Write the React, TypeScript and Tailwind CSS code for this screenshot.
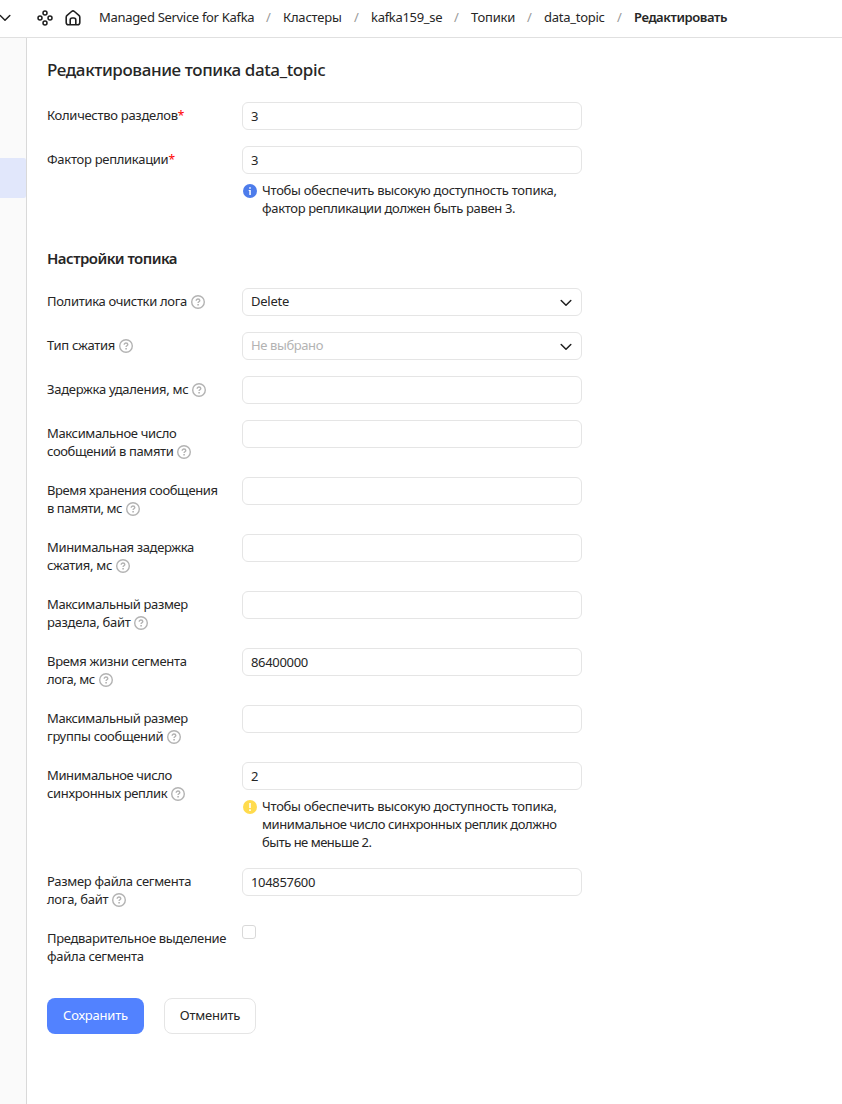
import type { ReactNode } from 'react';

function HelpIcon() {
  return (
    <svg className="ml-1 inline-block size-[14px] align-[-3px]" viewBox="0 0 14 14" fill="none" stroke="#b3b3b3" strokeWidth="1.4">
      <circle cx="7" cy="7" r="6.3" />
      <path d="M5.2 5.7c0-1 .8-1.7 1.8-1.7s1.8.7 1.8 1.6c0 1.2-1.7 1.2-1.7 2.4" />
      <path d="M7.1 9v1.4" strokeWidth="1.6" />
    </svg>
  );
}

function Chevron({ className }: { className: string }) {
  return (
    <svg className={className} viewBox="0 0 12 8" fill="none" stroke="#1f1f1f" strokeWidth="1.5" strokeLinecap="round" strokeLinejoin="round">
      <path d="M1.2 1.5 6 6.2l4.8-4.7" />
    </svg>
  );
}

function Row({ lines, required, help, children }: { lines: [string, string][]; required?: boolean; help?: boolean; children: ReactNode }) {
  return (
    <div className="flex items-start">
      <div className="w-[195px] shrink-0 pt-1 pb-px leading-[18px] whitespace-nowrap">
        {lines.map(([text, tracking], i) => (
          <div key={text} className="h-[18px]">
            <span className={tracking}>{text}</span>
            {required && <span className="text-[12px] text-[#f00]">*</span>}
            {help && i === lines.length - 1 && <HelpIcon />}
          </div>
        ))}
      </div>
      <div className="w-[340px]">{children}</div>
    </div>
  );
}

function Field({ value }: { value?: string }) {
  return <div className="flex h-7 items-center rounded-md border border-[#e5e5e5] px-2 pt-[2px] tracking-[-0.32px]">{value}</div>;
}

function Select({ value, muted }: { value: string; muted?: boolean }) {
  return (
    <div className="flex h-7 items-center justify-between rounded-md border border-[#e5e5e5] px-2">
      <span className={muted ? 'tracking-[-0.4px] text-[#b3b3b3]' : 'tracking-[-0.25px]'}>{value}</span>
      <Chevron className="mr-[1px] mt-px h-2 w-3" />
    </div>
  );
}

function Hint({ kind, lines }: { kind: 'info' | 'warning'; lines: [string, string][] }) {
  return (
    <div className="mt-[7px] mb-px flex leading-[18px]">
      <svg className="mt-[3px] mr-[5px] ml-px size-[14px] shrink-0" viewBox="0 0 14 14">
        <circle cx="7" cy="7" r="7" fill={kind === 'info' ? '#4d7ceb' : '#ffdb4d'} />
        {kind === 'info' ? (
          <path d="M6.2 3.2h1.6v1.5H6.2zM5.7 6h2.1v5H6.3V7.1h-.6z" fill="#fff" />
        ) : (
          <path d="M6.2 3h1.6v5H6.2zM6.2 9.3h1.6V11H6.2z" fill="#fff" />
        )}
      </svg>
      <div className="whitespace-nowrap">
        {lines.map(([text, tracking]) => (
          <div key={text} className={tracking}>{text}</div>
        ))}
      </div>
    </div>
  );
}

const crumbs: [string, string][] = [
  ['Managed Service for Kafka', 'w-[155px] tracking-[-0.31px]'],
  ['Кластеры', 'w-[59px] tracking-[-0.2px]'],
  ['kafka159_se', 'w-[71px] tracking-[-0.3px]'],
  ['Топики', 'w-[44px] tracking-[-0.2px]'],
  ['data_topic', 'w-[61px] tracking-[-0.26px]'],
];

export default function App() {
  return (
    <div className="flex h-[1104px] flex-col overflow-hidden bg-white font-['Noto_Sans','Open_Sans',sans-serif] text-[13px] text-[#262626]">
      <header className="flex h-[38px] shrink-0 items-center border-b border-[#e0e0e0] pb-[2px]">
        <Chevron className="-ml-px h-2 w-3" />
        <svg className="ml-[26px] size-4" viewBox="0 0 16 16" fill="none" stroke="#1f1f1f" strokeWidth="1.5">
          <circle cx="8" cy="3" r="2" />
          <circle cx="8" cy="13" r="2" />
          <circle cx="3" cy="8" r="2" />
          <circle cx="13" cy="8" r="2" />
        </svg>
        <svg className="ml-3 size-4" viewBox="0 0 16 16" fill="none" stroke="#1f1f1f" strokeWidth="1.6" strokeLinejoin="round">
          <path d="M1.2 7.2c0-.8.3-1.4.9-1.9L6.6 1.5a2.2 2.2 0 0 1 2.8 0l4.5 3.8c.6.5.9 1.1.9 1.9v5.3a2.3 2.3 0 0 1-2.3 2.3h-9a2.3 2.3 0 0 1-2.3-2.3z" />
          <path d="M5.2 14.6V10a2 2 0 0 1 2-2h1.6a2 2 0 0 1 2 2v4.6" />
        </svg>
        <nav className="ml-[18px] flex whitespace-nowrap">
          {crumbs.map(([text, style]) => (
            <div key={text} className="flex">
              <span className={style}>{text}</span>
              <span className="w-[29px] text-center text-[#999]">/</span>
            </div>
          ))}
          <span className="font-semibold tracking-[-0.4px]">Редактировать</span>
        </nav>
      </header>
      <div className="flex flex-1">
        <aside className="w-[27px] shrink-0 border-r border-[#d9d9d9] bg-[#fafafa] pt-[120px]">
          <div className="h-10 rounded-r-[2px] bg-[#e1e7fb]" />
        </aside>
        <main className="pl-5">
          <h1 className="mt-5 h-6 text-[17px] leading-6 font-medium tracking-[-0.39px] whitespace-nowrap">Редактирование топика data_topic</h1>
          <div className="mt-5 flex flex-col gap-4">
            <Row lines={[['Количество разделов', 'tracking-[-0.29px]']]} required><Field value="3" /></Row>
            <Row lines={[['Фактор репликации', 'tracking-[-0.29px]']]} required>
              <Field value="3" />
              <Hint kind="info" lines={[['Чтобы обеспечить высокую доступность топика,', 'tracking-[-0.26px]'], ['фактор репликации должен быть равен 3.', 'tracking-[-0.34px]']]} />
            </Row>
          </div>
          <h2 className="mt-[30px] h-5 text-[15px] leading-5 font-semibold tracking-[-0.55px]">Настройки топика</h2>
          <div className="mt-5 flex flex-col gap-4">
            <Row help lines={[['Политика очистки лога', 'tracking-[-0.32px]']]}><Select value="Delete" /></Row>
            <Row help lines={[['Тип сжатия', 'tracking-[-0.3px]']]}><Select value="Не выбрано" muted /></Row>
            <Row help lines={[['Задержка удаления, мс', 'tracking-[-0.28px]']]}><Field /></Row>
            <Row help lines={[['Максимальное число', 'tracking-[-0.36px]'], ['сообщений в памяти', 'tracking-[-0.38px]']]}><Field /></Row>
            <Row help lines={[['Время хранения сообщения', 'tracking-[-0.4px]'], ['в памяти, мс', 'tracking-[-0.48px]']]}><Field /></Row>
            <Row help lines={[['Минимальная задержка', 'tracking-[-0.35px]'], ['сжатия, мс', 'tracking-[-0.3px]']]}><Field /></Row>
            <Row help lines={[['Максимальный размер', 'tracking-[-0.37px]'], ['раздела, байт', 'tracking-[-0.3px]']]}><Field /></Row>
            <Row help lines={[['Время жизни сегмента', 'tracking-[-0.3px]'], ['лога, мс', 'tracking-[-0.48px]']]}><Field value="86400000" /></Row>
            <Row help lines={[['Максимальный размер', 'tracking-[-0.37px]'], ['группы сообщений', 'tracking-[-0.31px]']]}><Field /></Row>
            <Row help lines={[['Минимальное число', 'tracking-[-0.4px]'], ['синхронных реплик', 'tracking-[-0.35px]']]}>
              <Field value="2" />
              <Hint kind="warning" lines={[['Чтобы обеспечить высокую доступность топика,', 'tracking-[-0.26px]'], ['минимальное число синхронных реплик должно', 'tracking-[-0.4px]'], ['быть не меньше 2.', 'tracking-[-0.5px]']]} />
            </Row>
            <Row help lines={[['Размер файла сегмента', 'tracking-[-0.29px]'], ['лога, байт', 'tracking-[-0.3px]']]}><Field value="104857600" /></Row>
            <Row lines={[['Предварительное выделение', 'tracking-[-0.32px]'], ['файла сегмента', 'tracking-[-0.28px]']]}>
              <div className="size-[14px] rounded-[3px] border border-[#d9d9d9]" />
            </Row>
          </div>
          <div className="mt-8 flex gap-5">
            <button className="h-9 w-[97px] rounded-lg bg-[#5282ff] tracking-[-0.2px] text-white">Сохранить</button>
            <button className="h-9 w-[92px] rounded-lg border border-[#e5e5e5] tracking-[-0.25px]">Отменить</button>
          </div>
        </main>
      </div>
    </div>
  );
}
